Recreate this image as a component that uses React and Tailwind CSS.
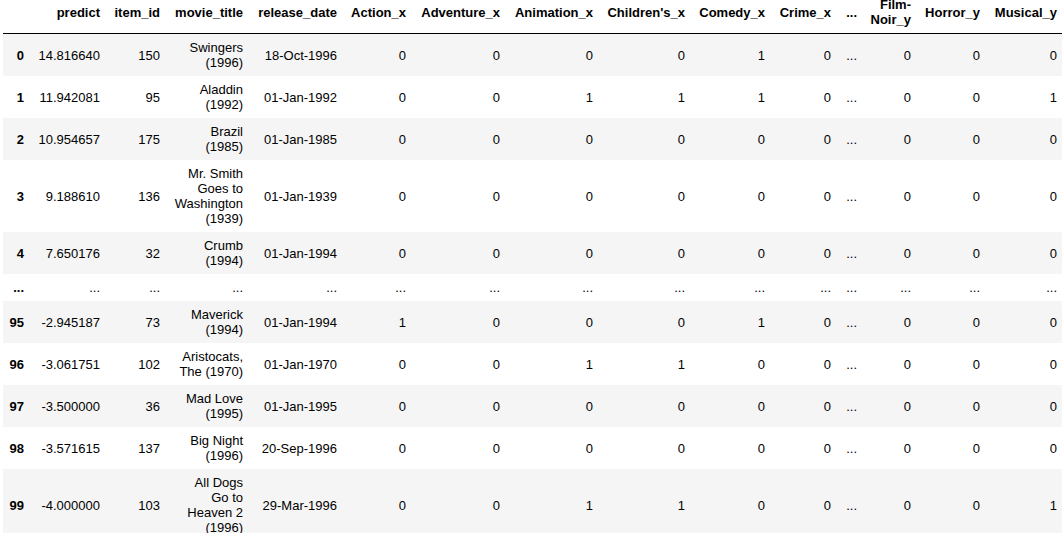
const COLS = [
  { key: "idx", label: "", w: "w-[27px]" },
  { key: "predict", label: "predict", w: "w-[76px]" },
  { key: "item_id", label: "item_id", w: "w-[60px]" },
  { key: "movie_title", label: "movie_title", w: "w-[83px]" },
  { key: "release_date", label: "release_date", w: "w-[94px]" },
  { key: "Action_x", label: "Action_x", w: "w-[69px]" },
  { key: "Adventure_x", label: "Adventure_x", w: "w-[94px]" },
  { key: "Animation_x", label: "Animation_x", w: "w-[93px]" },
  { key: "Childrens_x", label: "Children's_x", w: "w-[92px]" },
  { key: "Comedy_x", label: "Comedy_x", w: "w-[80px]" },
  { key: "Crime_x", label: "Crime_x", w: "w-[66px]" },
  { key: "dots", label: "...", w: "w-[26px]" },
  { key: "FilmNoir_y", label: ["Film-", "Noir_y"], w: "w-[54px]" },
  { key: "Horror_y", label: "Horror_y", w: "w-[69px]" },
  { key: "Musical_y", label: "Musical_y", w: "w-[77px]" },
];

// [index, predict, item_id, title lines, release_date, genre flags...]
const ROWS = [
  ["0", "14.816640", "150", ["Swingers", "(1996)"], "18-Oct-1996", [0, 0, 0, 0, 1, 0], [0, 0, 0]],
  ["1", "11.942081", "95", ["Aladdin", "(1992)"], "01-Jan-1992", [0, 0, 1, 1, 1, 0], [0, 0, 1]],
  ["2", "10.954657", "175", ["Brazil", "(1985)"], "01-Jan-1985", [0, 0, 0, 0, 0, 0], [0, 0, 0]],
  ["3", "9.188610", "136", ["Mr. Smith", "Goes to", "Washington", "(1939)"], "01-Jan-1939", [0, 0, 0, 0, 0, 0], [0, 0, 0]],
  ["4", "7.650176", "32", ["Crumb", "(1994)"], "01-Jan-1994", [0, 0, 0, 0, 0, 0], [0, 0, 0]],
  "gap",
  ["95", "-2.945187", "73", ["Maverick", "(1994)"], "01-Jan-1994", [1, 0, 0, 0, 1, 0], [0, 0, 0]],
  ["96", "-3.061751", "102", ["Aristocats,", "The (1970)"], "01-Jan-1970", [0, 0, 1, 1, 0, 0], [0, 0, 0]],
  ["97", "-3.500000", "36", ["Mad Love", "(1995)"], "01-Jan-1995", [0, 0, 0, 0, 0, 0], [0, 0, 0]],
  ["98", "-3.571615", "137", ["Big Night", "(1996)"], "20-Sep-1996", [0, 0, 0, 0, 0, 0], [0, 0, 0]],
  ["99", "-4.000000", "103", ["All Dogs", "Go to", "Heaven 2", "(1996)"], "29-Mar-1996", [0, 0, 1, 1, 0, 0], [0, 0, 1]],
];

const cell = "px-[6px] py-[6px] text-right align-middle whitespace-nowrap";

function Lines({ lines }) {
  return lines.map((l, i) => (
    <span key={i} className="block">
      {l}
    </span>
  ));
}

export default function App() {
  return (
    <div className="w-[1062px] h-[533px] overflow-hidden bg-white font-['Liberation_Sans',Arial,sans-serif] text-[13px] leading-[15px] text-black">
      <table className="table-fixed border-collapse ml-[3px] -mt-[9px] w-[1060px]">
        <colgroup>
          {COLS.map((c) => (
            <col key={c.key} className={c.w} />
          ))}
        </colgroup>
        <thead className="border-b border-black">
          <tr>
            {COLS.map((c) => (
              <th key={c.key} className={`${cell} font-bold`}>
                {Array.isArray(c.label) ? <Lines lines={c.label} /> : c.label}
              </th>
            ))}
          </tr>
        </thead>
        <tbody>
          {ROWS.map((r, i) => {
            const bg = i % 2 === 0 ? "bg-[#f5f5f5]" : "bg-white";
            if (r === "gap") {
              return (
                <tr key="gap" className={bg}>
                  {COLS.map((c, j) =>
                    j === 0 ? (
                      <th key={c.key} className={`${cell} font-bold`}>...</th>
                    ) : (
                      <td key={c.key} className={cell}>...</td>
                    )
                  )}
                </tr>
              );
            }
            const [idx, predict, itemId, title, date, xs, ys] = r;
            return (
              <tr key={idx} className={bg}>
                <th className={`${cell} font-bold`}>{idx}</th>
                <td className={cell}>{predict}</td>
                <td className={cell}>{itemId}</td>
                <td className={cell}>
                  <Lines lines={title} />
                </td>
                <td className={cell}>{date}</td>
                {xs.map((v, k) => (
                  <td key={"x" + k} className={cell}>{v}</td>
                ))}
                <td className={cell}>...</td>
                {ys.map((v, k) => (
                  <td key={"y" + k} className={cell}>{v}</td>
                ))}
              </tr>
            );
          })}
        </tbody>
      </table>
    </div>
  );
}
